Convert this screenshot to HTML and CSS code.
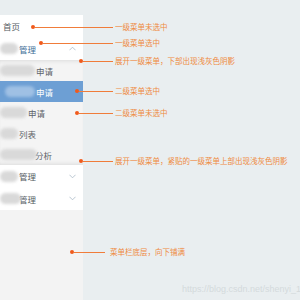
FILE: index.html
```html
<!DOCTYPE html>
<html lang="zh">
<head>
<meta charset="utf-8">
<link rel="stylesheet" href="styles.css">
</head>
<body>
<div class="page">
  <aside class="sidebar">
    <div class="item">首页</div>
    <div class="item active"><span class="blob b18"></span><span class="txt">管理</span><svg class="chev" viewBox="0 0 8 5"><polyline points="0.5,4.5 4,1 7.5,4.5"/></svg></div>
    <div class="sub">
      <div class="subitem"><span class="blob b35"></span><span class="txt">申请</span></div>
      <div class="subitem selected"><span class="blob b30 light"></span><span class="txt">申请</span></div>
      <div class="subitem"><span class="blob b27"></span><span class="txt">申请</span></div>
      <div class="subitem"><span class="blob b18"></span><span class="txt">列表</span></div>
      <div class="subitem"><span class="blob b37"></span><span class="txt cut">分析</span></div>
    </div>
    <div class="item"><span class="blob b18"></span><span class="txt">管理</span><svg class="chev" viewBox="0 0 8 5"><polyline points="0.5,0.5 4,4 7.5,0.5"/></svg></div>
    <div class="item"><span class="blob b21"></span><span class="txt cut">管理</span><svg class="chev" viewBox="0 0 8 5"><polyline points="0.5,0.5 4,4 7.5,0.5"/></svg></div>
  </aside>

  <div class="notes">
    <div class="note n1"><span class="dot"></span><span class="line"></span><span class="label">一级菜单未选中</span></div>
    <div class="note n2"><span class="dot"></span><span class="line"></span><span class="label">一级菜单选中</span></div>
    <div class="note n3"><span class="dot"></span><span class="line"></span><span class="label">展开一级菜单，下部出现浅灰色阴影</span></div>
    <div class="note n4"><span class="dot"></span><span class="line"></span><span class="label">二级菜单选中</span></div>
    <div class="note n5"><span class="dot"></span><span class="line"></span><span class="label">二级菜单未选中</span></div>
    <div class="note n6"><span class="dot"></span><span class="line"></span><span class="label">展开一级菜单，紧贴的一级菜单上部出现浅灰色阴影</span></div>
    <div class="note n7"><span class="dot"></span><span class="line"></span><span class="label">菜单栏底层，向下铺满</span></div>
  </div>

  <div class="watermark">https://blog.csdn.net/shenyi_15</div>
</div>
</body>
</html>
```

FILE: styles.css
```css
* { box-sizing: border-box; }
html, body {
  margin: 0;
  padding: 0;
  width: 300px;
  height: 300px;
  overflow: hidden;
  background: #e9eef0;
  font-family: "Noto Sans CJK SC", "Noto Sans", sans-serif;
}
.page {
  position: relative;
  width: 300px;
  height: 300px;
  padding-top: 15px;
}
.sidebar {
  width: 83px;
  height: 285px;
  background: #f3f3f3;
  display: flex;
  flex-direction: column;
}
.item {
  height: 22.5px;
  background: #ffffff;
  display: flex;
  align-items: center;
  padding-left: 3px;
  font-size: 8.5px;
  color: #555b61;
  white-space: nowrap;
  overflow: hidden;
}
.item.active .txt { color: #3f6f98; }
.sub {
  background: #f4f4f4;
  box-shadow: inset 0 4px 4px -3px rgba(0,0,0,0.10), inset 0 -4px 4px -3px rgba(0,0,0,0.10);
}
.subitem {
  height: 21px;
  display: flex;
  align-items: center;
  padding-left: 3px;
  font-size: 8.5px;
  color: #5d6368;
  white-space: nowrap;
  overflow: hidden;
}
.subitem.selected {
  background: #6d9fd4;
  color: #ffffff;
}
.blob {
  display: inline-block;
  height: 11px;
  margin-left: -3px;
  margin-right: 1px;
  border-radius: 6px;
  background: #d9d9d9;
  filter: blur(1.4px);
  flex: none;
}
.blob.light { background: #9fc0e4; margin-left: 2px; }
.b18 { width: 18px; }
.b21 { width: 21px; }
.b27 { width: 27px; }
.b30 { width: 30px; }
.b35 { width: 35px; }
.b37 { width: 37px; }
.txt.cut { margin-left: -3px; }
.chev {
  margin-left: auto;
  margin-right: 7px;
  width: 7px;
  height: 5px;
  fill: none;
  stroke: #a8b7c6;
  stroke-width: 0.9;
  flex: none;
}

.notes { position: absolute; inset: 0; pointer-events: none; }
.note {
  position: absolute;
  height: 10px;
  display: flex;
  align-items: center;
  white-space: nowrap;
}
.dot {
  width: 4px;
  height: 4px;
  border-radius: 50%;
  background: #f05a1c;
  flex: none;
}
.line {
  height: 1px;
  background: #f07c3a;
  flex: none;
}
.label {
  margin-left: 2px;
  font-size: 7.5px;
  color: #ef8a40;
  line-height: 10px;
}
.n1 { left: 31px; top: 22px; }
.n1 .line { width: 78px; }
.n2 { left: 39px; top: 38px; }
.n2 .line { width: 70px; }
.n3 { left: 79px; top: 56px; }
.n3 .line { width: 30px; }
.n4 { left: 75px; top: 86px; }
.n4 .line { width: 34px; }
.n5 { left: 75px; top: 108px; }
.n5 .line { width: 34px; }
.n6 { left: 79px; top: 156px; }
.n6 .line { width: 30px; }
.n7 { left: 70px; top: 247px; }
.n7 .line { width: 31px; }
.n7 .label { margin-left: 5px; }

.watermark {
  position: absolute;
  left: 182px;
  top: 284px;
  font-family: "Liberation Sans", Arial, sans-serif;
  font-size: 9px;
  color: #d4dadc;
  white-space: nowrap;
}
```
